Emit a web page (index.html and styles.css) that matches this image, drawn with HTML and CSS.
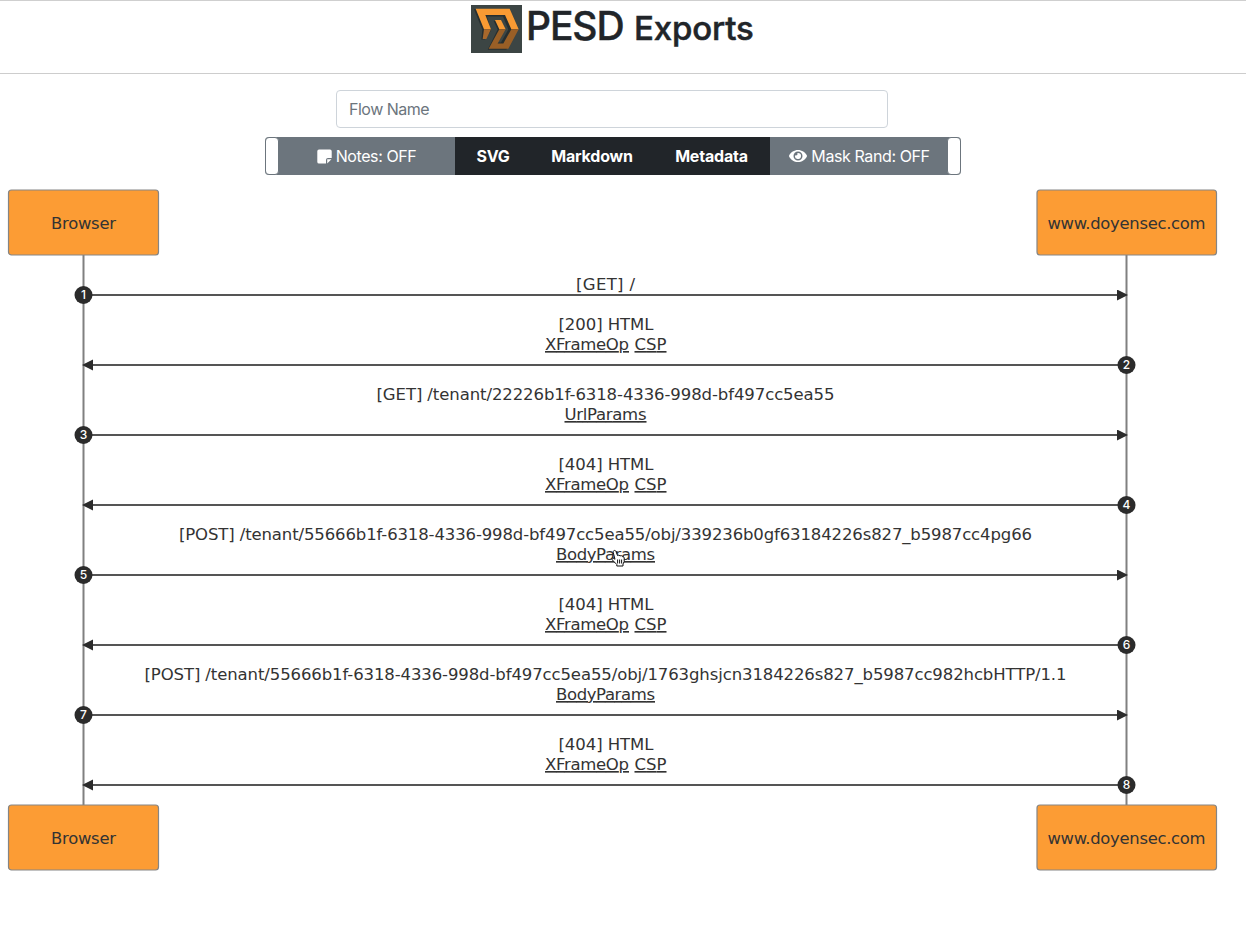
FILE: index.html
```html
<!DOCTYPE html>
<html lang="en">
<head>
<meta charset="utf-8">
<title>PESD Exports</title>
<link rel="stylesheet" href="styles.css">
</head>
<body>
<header class="header">
  <svg class="logo" viewBox="0 0 153 143" preserveAspectRatio="none">
    <rect width="153" height="143" fill="#3c4544"/>
    <path d="M9 13L34 74L31 103H42L60 76L48 34H96L112 73L90 112L76 112L98 72L86 48L68 48L80 73L50 133L106 133L138 74L112 12Z" fill="#262e2f"/>
    <path d="M14 11H116L143 72H121L102 30H43L60 72H39Z" fill="#f89a33"/>
    <path d="M72 45H90L104 72H85Z" fill="#f89a33"/>
    <path d="M39 72H60L46 101H35Z" fill="#a8682c"/>
    <path d="M85 72H104L80 115H97L121 72H143L112 130H53Z" fill="#9a5f26"/>
  </svg>
  <h1 class="title"><span class="title-main">PESD</span><span class="title-sub">Exports</span></h1>
</header>
<main>
  <div class="controls">
    <input class="flow-name" type="text" placeholder="Flow Name">
    <div class="toolbar">
      <span class="cap cap-left"></span>
      <button class="btn toggle notes">
        <svg width="15" height="15" viewBox="0 0 15 15"><path d="M2 .5h11a1.7 1.7 0 0 1 1.7 1.7V9H11a2 2 0 0 0-2 2v3.6H2A1.7 1.7 0 0 1 .3 13V2.200A1.700 1.700 0 0 1 2 .5zM10.200 14.400V10.200H14.500z" fill="#fff"/></svg>
        <span>Notes: OFF</span>
      </button>
      <button class="btn dark svg">SVG</button>
      <button class="btn dark markdown">Markdown</button>
      <button class="btn dark metadata">Metadata</button>
      <button class="btn toggle mask">
        <svg width="18" height="16" viewBox="0 0 576 512"><path fill="#fff" d="M572.52 241.400C518.290 135.590 410.930 64 288 64S57.680 135.640 3.480 241.410a32.350 32.350 0 0 0 0 29.190C57.710 376.410 165.070 448 288 448s230.320-71.640 284.520-177.410a32.350 32.350 0 0 0 0-29.190zM288 400a144 144 0 1 1 144-144 143.930 143.930 0 0 1-144 144zm0-240a95.310 95.310 0 0 0-25.310 3.790 47.850 47.850 0 0 1-66.900 66.900A95.780 95.780 0 1 0 288 160z"/></svg>
        <span>Mask Rand: OFF</span>
      </button>
      <span class="cap cap-right"></span>
    </div>
  </div>
  <svg class="diagram" width="1246" height="700" viewBox="0 180 1246 700">
    <defs>
      <marker id="arrow" refX="9" refY="5.500" markerWidth="12" markerHeight="12" markerUnits="userSpaceOnUse" orient="auto"><path d="M0 0L11 5.500L0 11Z" fill="#2b2b2b"/></marker>
    </defs>
    <path class="lifeline" d="M83.500 255V805M1126.500 255V805"/>
    <g class="actor">
      <rect x="8.500" y="190" width="150" height="65" rx="3"/><text x="83.500" y="229" textLength="65">Browser</text>
      <rect x="1037" y="190" width="179.500" height="65" rx="3"/><text x="1126.500" y="229" textLength="158">www.doyensec.com</text>
      <rect x="8.500" y="805" width="150" height="65" rx="3"/><text x="83.500" y="844" textLength="65">Browser</text>
      <rect x="1037" y="805" width="179.500" height="65" rx="3"/><text x="1126.500" y="844" textLength="158">www.doyensec.com</text>
    </g>
    <g class="message">
      <path d="M84 295H1126"/><path d="M1126 365H84"/><path d="M84 435H1126"/><path d="M1126 505H84"/>
      <path d="M84 575H1126"/><path d="M1126 645H84"/><path d="M84 715H1126"/><path d="M1126 785H84"/>
    </g>
    <g class="label">
      <text x="605.500" y="290" textLength="59">[GET] /</text>
      <text x="606" y="330" textLength="95">[200] HTML</text>
      <text x="605.500" y="400" textLength="458">[GET] /tenant/22226b1f-6318-4336-998d-bf497cc5ea55</text>
      <text x="606" y="470" textLength="95">[404] HTML</text>
      <text x="605.500" y="540" textLength="853">[POST] /tenant/55666b1f-6318-4336-998d-bf497cc5ea55/obj/339236b0gf63184226s827_b5987cc4pg66</text>
      <text x="606" y="610" textLength="95">[404] HTML</text>
      <text x="605.500" y="680" textLength="922">[POST] /tenant/55666b1f-6318-4336-998d-bf497cc5ea55/obj/1763ghsjcn3184226s827_b5987cc982hcbHTTP/1.1</text>
      <text x="606" y="750" textLength="95">[404] HTML</text>
    </g>
    <g class="label link">
      <text x="587" y="350" textLength="84">XFrameOp</text><text x="650.500" y="350" textLength="32">CSP</text>
      <text x="605.500" y="420" textLength="82">UrlParams</text>
      <text x="587" y="490" textLength="84">XFrameOp</text><text x="650.500" y="490" textLength="32">CSP</text>
      <text x="605.500" y="560" textLength="99">BodyParams</text>
      <text x="587" y="630" textLength="84">XFrameOp</text><text x="650.500" y="630" textLength="32">CSP</text>
      <text x="605.500" y="700" textLength="99">BodyParams</text>
      <text x="587" y="770" textLength="84">XFrameOp</text><text x="650.500" y="770" textLength="32">CSP</text>
    </g>
    <g class="number">
      <circle cx="83.500" cy="295" r="9"/><text x="83.500" y="299">1</text>
      <circle cx="1126.500" cy="365" r="9"/><text x="1126.500" y="369">2</text>
      <circle cx="83.500" cy="435" r="9"/><text x="83.500" y="439">3</text>
      <circle cx="1126.500" cy="505" r="9"/><text x="1126.500" y="509">4</text>
      <circle cx="83.500" cy="575" r="9"/><text x="83.500" y="579">5</text>
      <circle cx="1126.500" cy="645" r="9"/><text x="1126.500" y="649">6</text>
      <circle cx="83.500" cy="715" r="9"/><text x="83.500" y="719">7</text>
      <circle cx="1126.500" cy="785" r="9"/><text x="1126.500" y="789">8</text>
    </g>
    <g class="pointer" transform="translate(610 549.500)">
      <path d="M3.800 1.200C4.700.6 5.600 1 6 2L7.500 6Q9 5 10 6.400Q11.500 5.500 12.300 7Q14 6.700 14.200 8.500V12L13 14.500V16.500H6.800V15L2.200 10.300C1.200 8.900 2.700 7.900 4 9L5 9.800L3.300 3.300C3.100 2.400 3.200 1.600 3.800 1.200Z"/>
      <path d="M7.600 10V14M9.600 10V14M11.600 10V14"/>
    </g>
  </svg>
</main>
</body>
</html>
```

FILE: styles.css
```css
* { box-sizing: border-box; }
body { margin: 0; height: 941px; overflow: hidden; background: #fff; color: #212529; font-family: Inter, sans-serif; }
.header { height: 74px; border-top: 1px solid #cfcfcf; border-bottom: 1px solid #cdcdcd; display: flex; align-items: flex-start; padding: 4px 0 0 471px; }
.logo { width: 51px; height: 48px; }
.title { margin: 0 0 0 4px; display: flex; align-items: baseline; line-height: 42px; white-space: nowrap; font-weight: 500; }
.title-main { font-size: 39px; width: 108px; letter-spacing: -1.1px; -webkit-text-stroke: .4px #212529; }
.title-sub { font-size: 33px; letter-spacing: -.15px; -webkit-text-stroke: .5px #212529; }
.controls { height: 106px; padding-top: 16px; display: flex; flex-direction: column; align-items: flex-start; gap: 9px; }
.flow-name { width: 552px; height: 38px; margin-left: 336px; padding: 0 12px; border: 1px solid #ced4da; border-radius: 4px; font: 16px Inter, sans-serif; letter-spacing: -.5px; }
.flow-name::placeholder { color: #6c757d; opacity: 1; }
.toolbar { width: 696px; height: 38px; margin-left: 265px; display: flex; background: #6c757d; border-radius: 4px; }
.cap { width: 14px; background: #fff; border: 1px solid #6c757d; border-radius: 4px; flex: none; }
.btn { border: 0; padding: 0; height: 38px; display: flex; align-items: center; justify-content: center; gap: 4px; color: #fff; font: 16px Inter, sans-serif; white-space: nowrap; letter-spacing: -.4px; }
.toggle { background: #6c757d; }
.dark { background: #212529; font-weight: 700; letter-spacing: -.2px; }
.notes { width: 176px; padding-right: 1px; }
.svg { width: 76px; }
.markdown { width: 122px; }
.metadata { width: 117px; }
.mask { width: 177px; padding-left: 2px; }
.diagram { display: block; font-family: Verdana, "DejaVu Sans", sans-serif; }
.diagram text { text-anchor: middle; }
.lifeline { stroke: #808080; stroke-width: 2; }
.actor rect { fill: #fc9c34; stroke: #858585; stroke-width: 1.2; }
.actor text { fill: #333; font-size: 16.400px; }
.message path { stroke: #555; stroke-width: 2; marker-end: url(#arrow); }
.label text { fill: #333; font-size: 16.500px; }
.link text { text-decoration: underline; }
.number circle { fill: #2b2b2b; }
.number text { fill: #fff; font: 500 12px Inter, sans-serif; }
.pointer path { fill: #fff; stroke: #111; stroke-width: 1; }
```
